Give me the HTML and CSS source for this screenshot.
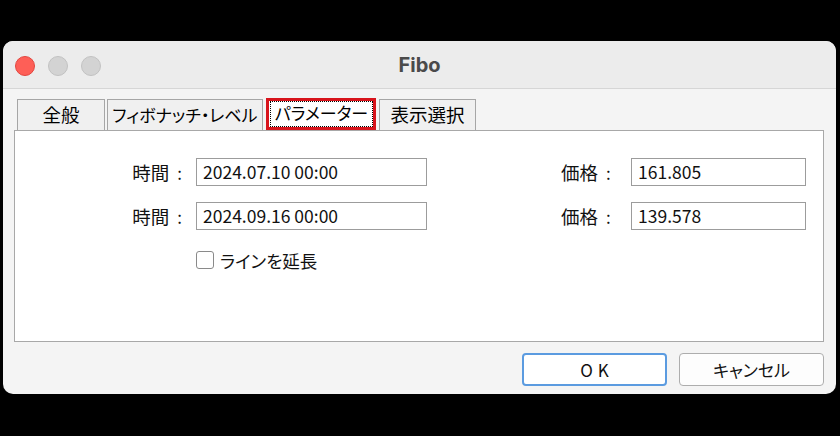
FILE: index.html
```html
<!DOCTYPE html>
<html lang="ja">
<head>
<meta charset="utf-8">
<title>Fibo</title>
<link rel="stylesheet" href="styles.css">
</head>
<body>
<div class="window">
  <div class="titlebar">
    <div class="lights">
      <span class="light red"></span>
      <span class="light grey"></span>
      <span class="light grey"></span>
    </div>
    <div class="title">Fibo</div>
  </div>
  <div class="content">
    <div class="tabs">
      <div class="tab t1 kanji">全般</div>
      <div class="tab t2">フィボナッチ・レベル</div>
      <div class="tab t3 active"><span class="focus">パラメーター</span></div>
      <div class="tab t4 kanji">表示選択</div>
    </div>
    <div class="panel">
      <div class="form">
        <div class="label">時間<span class="colon">:</span></div>
        <div class="field">2024.07.10 00:00</div>
        <div class="spacer"></div>
        <div class="label2">価格<span class="colon">:</span></div>
        <div class="field">161.805</div>

        <div class="label">時間<span class="colon">:</span></div>
        <div class="field">2024.09.16 00:00</div>
        <div class="spacer"></div>
        <div class="label2">価格<span class="colon">:</span></div>
        <div class="field">139.578</div>

        <div class="spacer"></div>
        <label class="check"><span class="box"></span><span class="check-text">ラインを延長</span></label>
      </div>
    </div>
    <div class="buttons">
      <button class="btn ok">OK</button>
      <button class="btn">キャンセル</button>
    </div>
  </div>
</div>
</body>
</html>
```
FILE: styles.css
```css
html, body {
  margin: 0;
  padding: 0;
  background: #000;
  width: 840px;
  height: 436px;
  overflow: hidden;
}
body {
  font-family: "Noto Sans CJK JP", sans-serif;
  font-feature-settings: "palt";
  color: #111;
}
.window {
  margin: 41px 0 0 3px;
  width: 833px;
  height: 353px;
  border-radius: 10px;
  background: #f4f4f4;
  overflow: hidden;
  display: flex;
  flex-direction: column;
}
.titlebar {
  height: 47px;
  background: #ececec;
  border-bottom: 1px solid #d6d6d6;
  display: flex;
  align-items: center;
  position: relative;
}
.lights {
  display: flex;
  gap: 13px;
  padding-left: 12px;
  padding-top: 2px;
}
.light {
  width: 20px;
  height: 20px;
  border-radius: 50%;
  box-sizing: border-box;
}
.light.red {
  background: #fe5f57;
  border: 1px solid #e2463f;
}
.light.grey {
  background: #d3d3d3;
  border: 1px solid #c2c2c2;
}
.title {
  position: absolute;
  left: 0;
  right: 0;
  top: 11px;
  text-align: center;
  font-family: "Inter", "Open Sans", sans-serif;
  font-weight: 700;
  font-size: 20px;
  color: #4a4a4a;
  line-height: 26px;
}
.content {
  padding: 10px 12px 0 11px;
  display: flex;
  flex-direction: column;
}
.tabs {
  display: flex;
  padding-left: 3px;
  height: 31px;
  align-items: flex-end;
}
.tab {
  box-sizing: border-box;
  height: 31px;
  border: 1px solid #a6a6a6;
  border-bottom: none;
  background: #f0f0f0;
  font-size: 17px;
  line-height: 29px;
  text-align: center;
  color: #000;
}
.tab.kanji {
  font-size: 18.5px;
}
.t1 { width: 88px; }
.t2 { width: 156px; margin-left: 2px; }
.t3 { width: 110px; margin-left: 3px; }
.t4 { width: 97px; margin-left: 3px; }
.tab.active {
  height: 32px;
  background: #fff;
  border: 3px solid #d8141c;
  padding: 0;
  line-height: 24px;
  display: flex;
}
.focus {
  flex: 1;
  border: 1px dotted #000;
  margin: 0 0 0 1px;
  line-height: 22px;
}
.panel {
  height: 212px;
  box-sizing: border-box;
  background: #fff;
  border: 1px solid #a8a8a8;
  padding-top: 27px;
}
.form {
  display: grid;
  grid-template-columns: 181px 231px 134px 70px 175px;
  grid-auto-rows: 28px;
  row-gap: 16px;
  align-items: center;
}
.label {
  font-size: 18.5px;
  text-align: right;
  padding-right: 14px;
  color: #111;
}
.label2 {
  font-size: 18.5px;
  color: #111;
}
.colon {
  font-size: 17px;
  margin-left: 8px;
}
.field {
  box-sizing: border-box;
  height: 28px;
  border: 1px solid #9c9c9c;
  background: #fff;
  font-size: 17.5px;
  line-height: 26px;
  padding-left: 6px;
  color: #111;
}
.check {
  grid-column: 2 / span 2;
  display: flex;
  align-items: center;
  gap: 6px;
}
.box {
  width: 18px;
  height: 18px;
  box-sizing: border-box;
  border: 1px solid #8a8a8a;
  border-radius: 3px;
  background: #fff;
}
.check-text {
  font-size: 17.5px;
}
.buttons {
  display: flex;
  justify-content: flex-end;
  gap: 12px;
  padding-top: 11px;
}
.btn {
  width: 145px;
  height: 33px;
  box-sizing: border-box;
  border: 1px solid #adadad;
  border-radius: 4px;
  background: #fdfdfd;
  font-family: "Noto Sans CJK JP", sans-serif;
  font-feature-settings: "palt";
  font-size: 17px;
  color: #111;
  padding: 0;
  line-height: 29px;
}
.btn.ok {
  border: 2px solid #5b9be0;
  background: #fff;
  letter-spacing: 5px;
  text-indent: 5px;
}
```
